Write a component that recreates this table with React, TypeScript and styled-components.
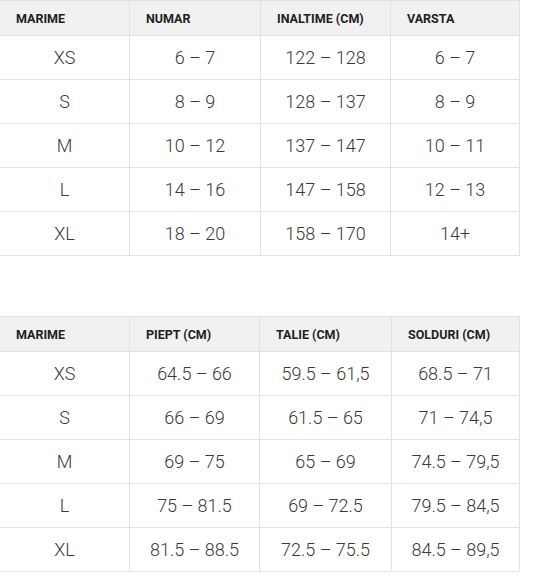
import React from "react";
import styled, { createGlobalStyle } from "styled-components";

const Global = createGlobalStyle`
  html, body { margin: 0; padding: 0; background: #fff; }
  body { font-family: Roboto, "Liberation Sans", sans-serif; }
`;

const Page = styled.div`
  display: flex;
  flex-direction: column;
  gap: 60px;
  width: 520px;
`;

const Grid = styled.div<{ $cols: string }>`
  display: grid;
  grid-template-columns: ${(p) => p.$cols};
  border-top: 1px solid #e2e2e2;
`;

const HeadCell = styled.div`
  box-sizing: border-box;
  height: 35px;
  display: flex;
  align-items: center;
  padding-left: 16px;
  background: #f1f1f1;
  border-right: 1px solid #e2e2e2;
  border-bottom: 1px solid #e2e2e2;
  font-size: 12.5px;
  font-weight: 700;
  color: #222;
  text-transform: uppercase;
  white-space: nowrap;
`;

const Cell = styled.div`
  box-sizing: border-box;
  height: 44px;
  display: flex;
  align-items: center;
  justify-content: center;
  border-right: 1px solid #e2e2e2;
  border-bottom: 1px solid #e2e2e2;
  font-size: 18px;
  font-weight: 300;
  color: #3a3a3a;
  white-space: nowrap;
`;

type TableProps = { cols: string; head: string[]; rows: string[][] };

const SizeTable = ({ cols, head, rows }: TableProps) => (
  <Grid $cols={cols}>
    {head.map((h) => (
      <HeadCell key={h}>{h}</HeadCell>
    ))}
    {rows.map((r, i) => r.map((c, j) => <Cell key={`${i}-${j}`}>{c}</Cell>))}
  </Grid>
);

const t1 = {
  head: ["Marime", "Numar", "Inaltime (cm)", "Varsta"],
  rows: [
    ["XS", "6 – 7", "122 – 128", "6 – 7"],
    ["S", "8 – 9", "128 – 137", "8 – 9"],
    ["M", "10 – 12", "137 – 147", "10 – 11"],
    ["L", "14 – 16", "147 – 158", "12 – 13"],
    ["XL", "18 – 20", "158 – 170", "14+"],
  ],
};

const t2 = {
  head: ["Marime", "Piept (cm)", "Talie (cm)", "Solduri (cm)"],
  rows: [
    ["XS", "64.5 – 66", "59.5 – 61,5", "68.5 – 71"],
    ["S", "66 – 69", "61.5 – 65", "71 – 74,5"],
    ["M", "69 – 75", "65 – 69", "74.5 – 79,5"],
    ["L", "75 – 81.5", "69 – 72.5", "79.5 – 84,5"],
    ["XL", "81.5 – 88.5", "72.5 – 75.5", "84.5 – 89,5"],
  ],
};

export default function App() {
  return (
    <>
      <Global />
      <Page>
        <SizeTable cols="130px 131px 130px 129px" head={t1.head} rows={t1.rows} />
        <SizeTable cols="130px 130px 132px 128px" head={t2.head} rows={t2.rows} />
      </Page>
    </>
  );
}
